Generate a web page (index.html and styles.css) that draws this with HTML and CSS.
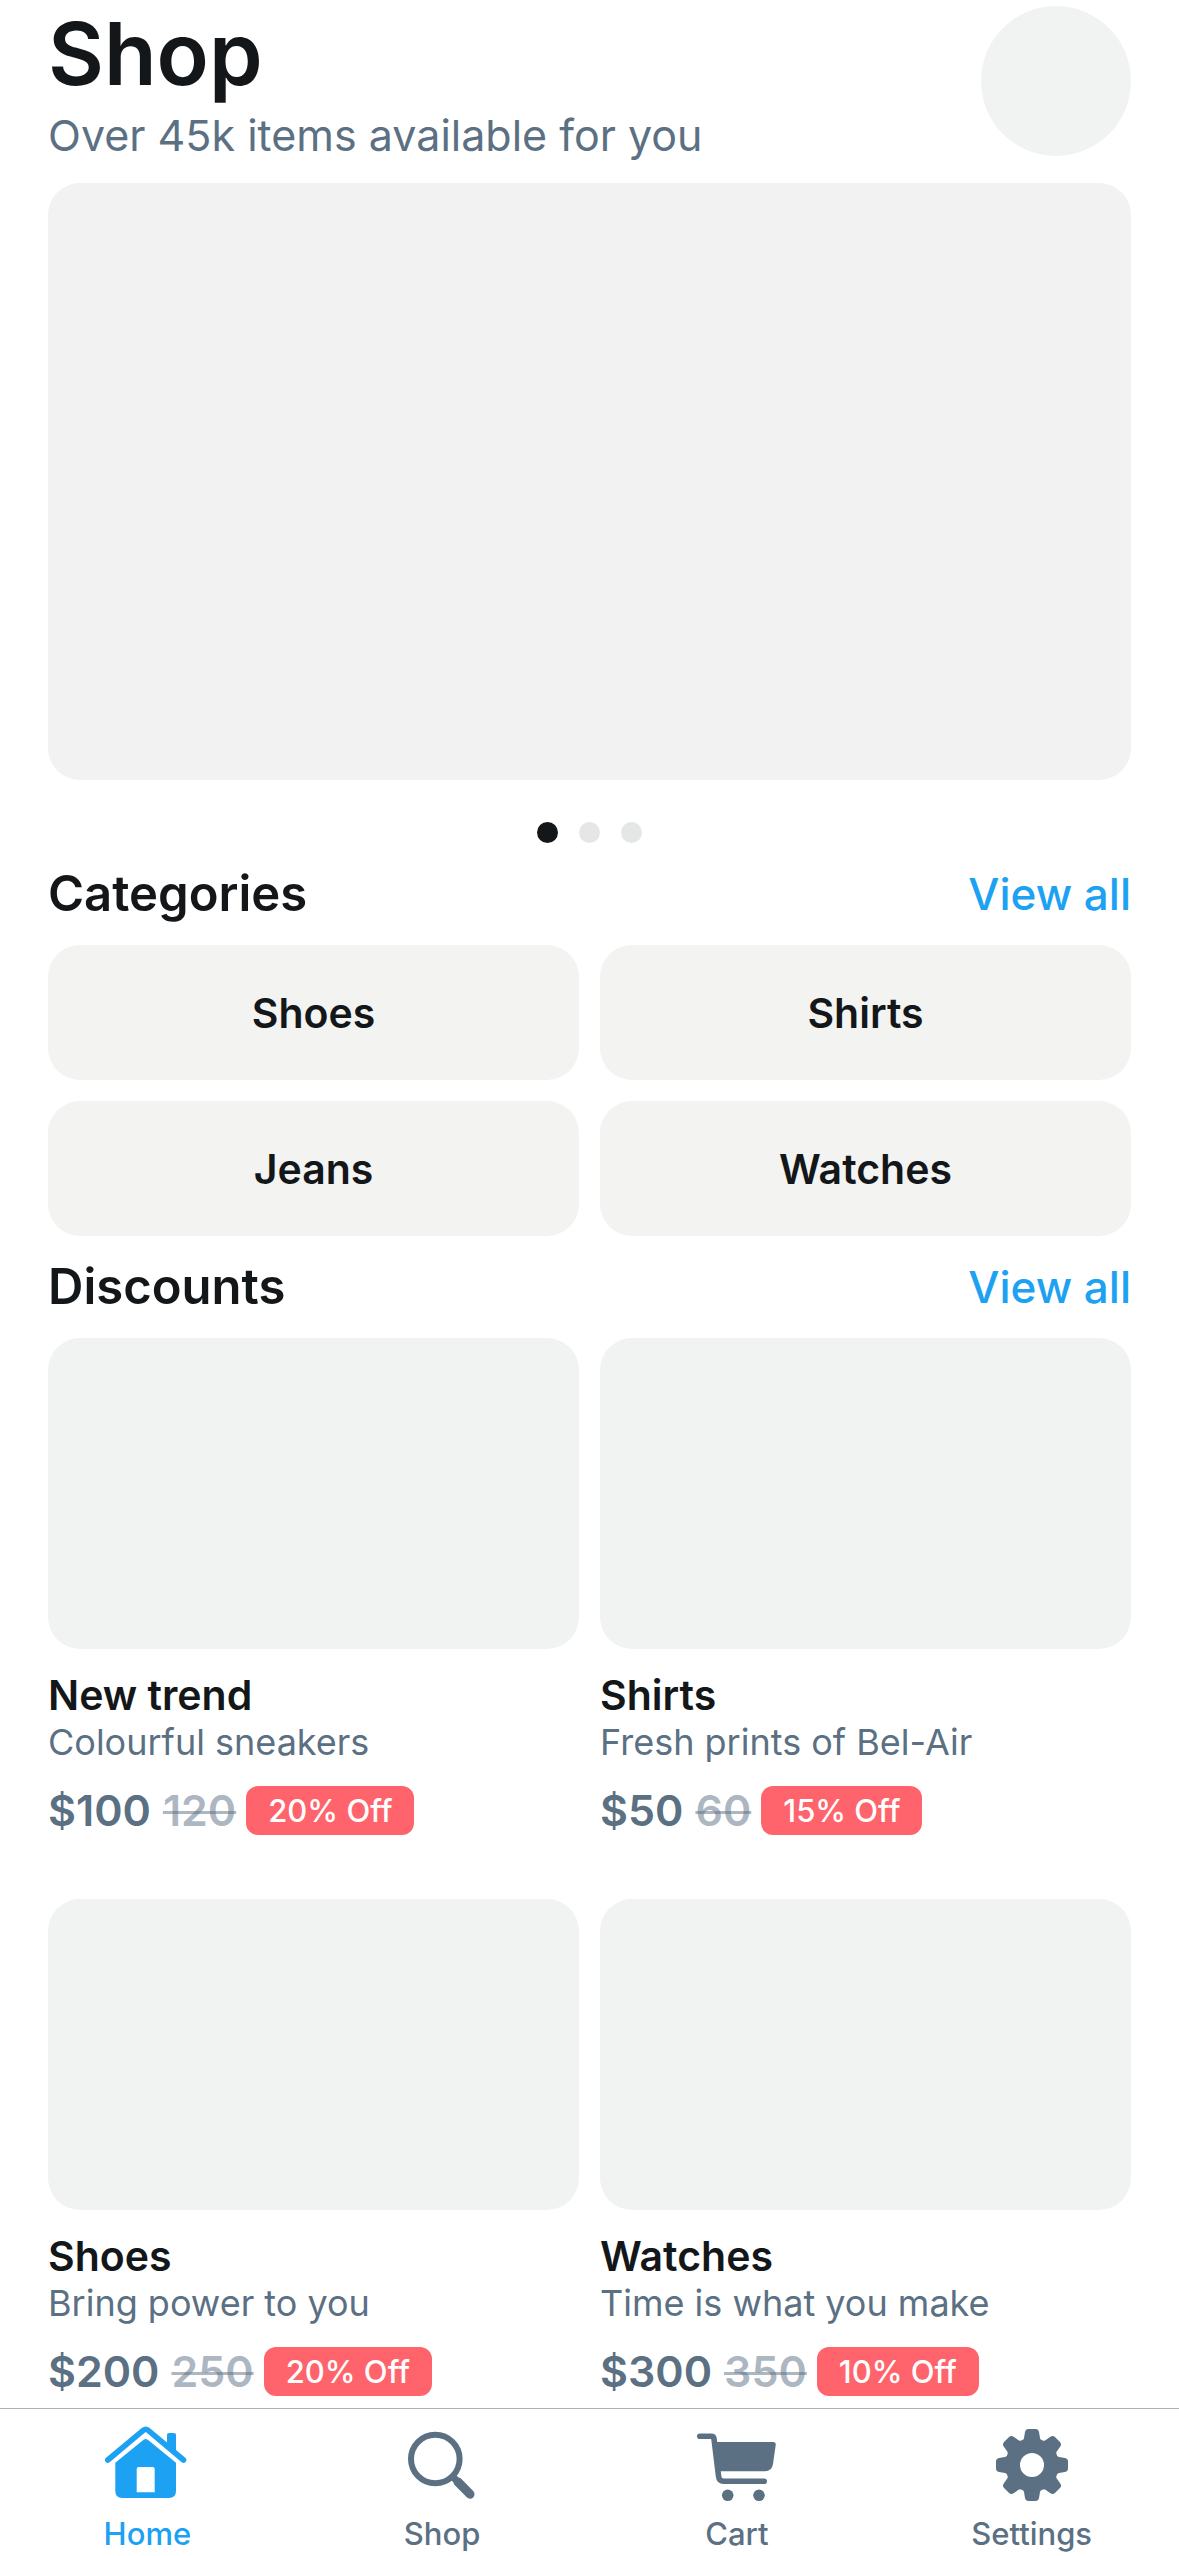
FILE: index.html
```html
<!DOCTYPE html>
<html lang="en">
<head>
  <meta charset="utf-8">
  <meta name="viewport" content="width=device-width, initial-scale=1">
  <title>Shop</title>
  <link rel="stylesheet" href="styles.css">
</head>
<body>
  <main class="page">
    <header class="header">
      <div>
        <h1 class="title">Shop</h1>
        <p class="subtitle">Over 45k items available for you</p>
      </div>
      <div class="avatar"></div>
    </header>

    <section class="carousel">
      <div class="slide"></div>
      <div class="dots">
        <button class="dot dot-active" type="button" aria-label="Slide 1"></button>
        <button class="dot" type="button" aria-label="Slide 2"></button>
        <button class="dot" type="button" aria-label="Slide 3"></button>
      </div>
    </section>

    <section>
      <div class="section-head">
        <h2 class="section-title">Categories</h2>
        <a class="view-all" href="#categories">View all</a>
      </div>
      <div class="categories">
        <button class="category" type="button">Shoes</button>
        <button class="category" type="button">Shirts</button>
        <button class="category" type="button">Jeans</button>
        <button class="category" type="button">Watches</button>
      </div>
    </section>

    <section>
      <div class="section-head">
        <h2 class="section-title">Discounts</h2>
        <a class="view-all" href="#discounts">View all</a>
      </div>
      <div class="products">
        <article class="product">
          <div class="thumb"></div>
          <h3 class="name">New trend</h3>
          <p class="note">Colourful sneakers</p>
          <div class="prices"><span class="price">$100</span><s class="old-price">120</s><span class="badge">20% Off</span></div>
        </article>
        <article class="product">
          <div class="thumb"></div>
          <h3 class="name">Shirts</h3>
          <p class="note">Fresh prints of Bel-Air</p>
          <div class="prices"><span class="price">$50</span><s class="old-price">60</s><span class="badge">15% Off</span></div>
        </article>
        <article class="product">
          <div class="thumb"></div>
          <h3 class="name">Shoes</h3>
          <p class="note">Bring power to you</p>
          <div class="prices"><span class="price">$200</span><s class="old-price">250</s><span class="badge">20% Off</span></div>
        </article>
        <article class="product">
          <div class="thumb"></div>
          <h3 class="name">Watches</h3>
          <p class="note">Time is what you make</p>
          <div class="prices"><span class="price">$300</span><s class="old-price">350</s><span class="badge">10% Off</span></div>
        </article>
      </div>
    </section>
  </main>

  <nav class="tabs">
    <a class="tab tab-active" href="#home">
      <svg class="icon" viewBox="0 0 84 84" aria-hidden="true">
        <path d="M62 23V12q0-2 2-2h5q2 0 2 2v18z" fill="currentColor"/>
        <path d="M2.800 37 38.500 7.200q2.200-1.800 4.400 0L78.500 37" fill="none" stroke="currentColor" stroke-width="5.600" stroke-linecap="round"/>
        <path fill="currentColor" fill-rule="evenodd" d="M10.300 39.700 38.600 16.800q2.100-1.600 4.200 0L71 39.700V68q0 7-7 7H17.300q-7 0-7-7zM33.700 44q-2 0-2 2v23.300h18V46q0-2-2-2z"/>
      </svg>
      <span class="tab-label">Home</span>
    </a>
    <a class="tab" href="#shop">
      <svg class="icon" viewBox="0 0 84 84" fill="none" stroke="currentColor" aria-hidden="true">
        <circle cx="35.300" cy="36" r="24.300" stroke-width="6"/>
        <path d="M52 53l6 6" stroke-width="7"/>
        <path d="M58 59l12 12.200" stroke-width="9" stroke-linecap="round"/>
      </svg>
      <span class="tab-label">Shop</span>
    </a>
    <a class="tab" href="#cart">
      <svg class="icon" viewBox="0 0 84 84" aria-hidden="true">
        <path d="M4.800 13.300H16.500q2.200 0 2.500 2.500L23.600 53.500q.6 4.800 5 4.800H69.200" fill="none" stroke="currentColor" stroke-width="5.600" stroke-linecap="round"/>
        <path d="M20 19H78q3 0 2.700 3L78 41q-1 7.300-8 7.300H24z" fill="currentColor"/>
        <circle cx="32.700" cy="72.300" r="5.800" fill="currentColor"/>
        <circle cx="64" cy="72.300" r="5.800" fill="currentColor"/>
      </svg>
      <span class="tab-label">Cart</span>
    </a>
    <a class="tab" href="#settings">
      <svg class="icon" viewBox="0 0 84 84" fill="currentColor" aria-hidden="true">
        <defs>
          <path id="tooth" d="M30 18q3.500-.5 4-3l1-6q.6-3 3.500-3h7q2.900 0 3.500 3l1 6q.5 2.500 4 3l-4 6H34z"/>
        </defs>
        <circle cx="42" cy="42" r="19" fill="none" stroke="currentColor" stroke-width="14"/>
        <use href="#tooth"/>
        <use href="#tooth" transform="rotate(45 42 42)"/>
        <use href="#tooth" transform="rotate(90 42 42)"/>
        <use href="#tooth" transform="rotate(135 42 42)"/>
        <use href="#tooth" transform="rotate(180 42 42)"/>
        <use href="#tooth" transform="rotate(225 42 42)"/>
        <use href="#tooth" transform="rotate(270 42 42)"/>
        <use href="#tooth" transform="rotate(315 42 42)"/>
      </svg>
      <span class="tab-label">Settings</span>
    </a>
  </nav>
</body>
</html>
```
FILE: styles.css
```css
:root {
  --ink: #14171a;
  --muted: #5b7083;
  --accent: #1da1f2;
  --placeholder: #f1f3f3;
  --surface: #ffffff;
}

* {
  box-sizing: border-box;
}

body {
  display: flex;
  flex-direction: column;
  min-height: 100vh;
  margin: 0;
  background: var(--surface);
  color: var(--ink);
  font-family: Inter, "Liberation Sans", sans-serif;
}

h1,
h2,
h3,
p {
  margin: 0;
}

a {
  color: inherit;
  text-decoration: none;
}

button {
  border: 0;
  padding: 0;
  color: inherit;
  font: inherit;
}

.page {
  padding: 6px 48px 12px;
}

.header {
  display: flex;
  justify-content: space-between;
  align-items: flex-start;
  padding-bottom: 15px;
}

.title {
  font-size: 86px;
  font-weight: 600;
  line-height: 96px;
}

.subtitle {
  color: var(--muted);
  font-size: 43px;
  line-height: 66px;
}

.avatar {
  width: 150px;
  height: 150px;
  border-radius: 50%;
  background: var(--placeholder);
}

.slide {
  aspect-ratio: 1083 / 597;
  border-radius: 32px;
  background: #f2f2f2;
}

.dots {
  display: flex;
  justify-content: center;
  gap: 21px;
  padding-top: 42px;
}

.dot {
  width: 21px;
  height: 21px;
  border-radius: 50%;
  background: #e5e7e6;
}

.dot-active {
  background: var(--ink);
}

.section-head {
  display: flex;
  justify-content: space-between;
  padding: 21px 0;
  line-height: 60px;
}

.section-title {
  font-size: 49px;
  font-weight: 600;
}

.view-all {
  color: var(--accent);
  font-size: 44px;
  font-weight: 500;
}

.categories {
  display: grid;
  grid-template-columns: 1fr 1fr;
  gap: 21px;
}

.category {
  height: 135px;
  border-radius: 32px;
  background: #f3f3f1;
  font-size: 41px;
  font-weight: 600;
}

.products {
  display: grid;
  grid-template-columns: 1fr 1fr;
  gap: 64px 21px;
}

.thumb {
  aspect-ratio: 531 / 311;
  margin-bottom: 21px;
  border-radius: 32px;
  background: var(--placeholder);
}

.name {
  font-size: 41px;
  font-weight: 600;
  line-height: 50px;
}

.note {
  color: var(--muted);
  font-size: 36px;
  line-height: 44px;
}

.prices {
  display: flex;
  align-items: center;
  margin-top: 22px;
  color: var(--muted);
  font-size: 43px;
  font-weight: 600;
  line-height: 49px;
}

.old-price {
  margin: 0 10px 0 12px;
  color: rgb(91 112 131 / 50%);
  text-decoration-thickness: 3px;
}

.badge {
  padding: 0 22px;
  border-radius: 12px;
  background: #ff646c;
  color: #ffffff;
  font-size: 31px;
  font-weight: 500;
}

.tabs {
  position: sticky;
  bottom: 0;
  display: grid;
  grid-template-columns: repeat(4, 1fr);
  margin-top: auto;
  padding: 14px 0 2px;
  border-top: 1px solid #b0b1b2;
  background: var(--surface);
  color: var(--muted);
}

.tab {
  display: flex;
  flex-direction: column;
  align-items: center;
  gap: 7px;
}

.tab-active {
  color: var(--accent);
}

.icon {
  width: 84px;
  height: 84px;
}

.tab-label {
  font-size: 31px;
  font-weight: 500;
  line-height: 40px;
}
```
